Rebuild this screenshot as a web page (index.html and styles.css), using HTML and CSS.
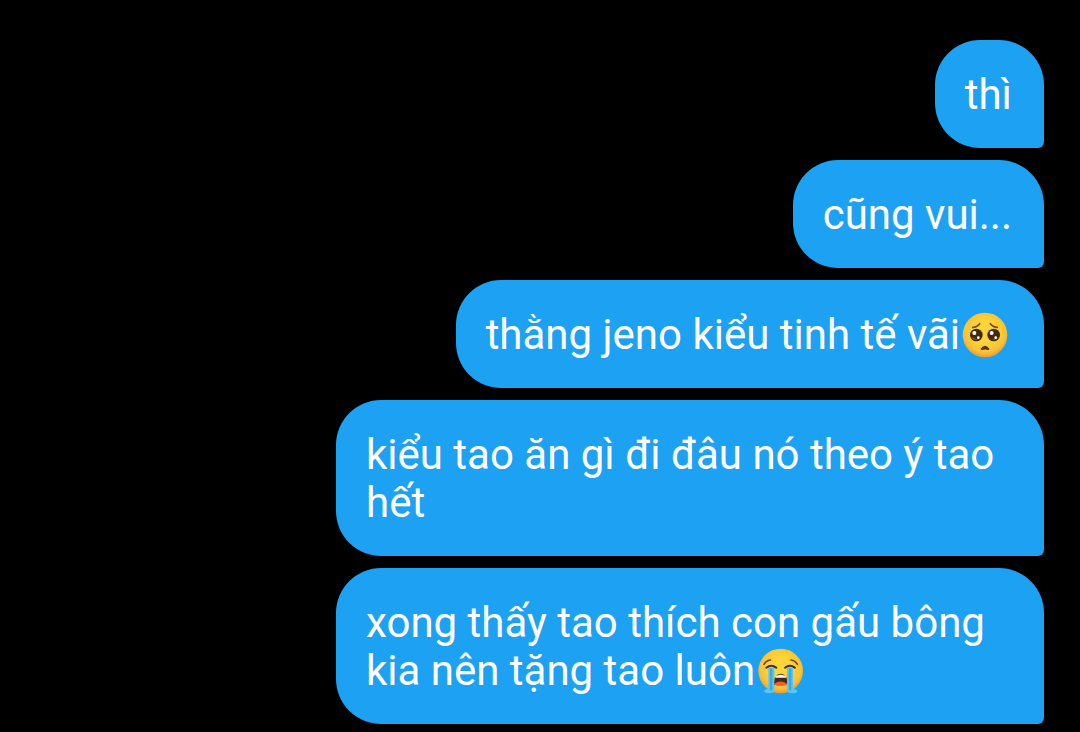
FILE: index.html
```html
<!DOCTYPE html>
<html lang="vi">
<head>
  <meta charset="utf-8">
  <meta name="viewport" content="width=device-width, initial-scale=1">
  <title>Tin nhắn</title>
  <link rel="stylesheet" href="styles.css">
</head>
<body>
  <main class="thread">
    <p class="bubble">thì</p>
    <p class="bubble">cũng vui...</p>
    <p class="bubble">thằng jeno kiểu tinh tế vãi<svg class="emoji" viewBox="19 19 156 138" aria-hidden="true">
      <defs>
        <radialGradient id="face" cx="50%" cy="42%" r="58%">
          <stop offset="0.4" stop-color="#fcd53a"/>
          <stop offset="0.8" stop-color="#f8c234"/>
          <stop offset="1" stop-color="#e39f35"/>
        </radialGradient>
      </defs>
      <circle cx="94" cy="88" r="67" fill="url(#face)"/>
      <g fill="none" stroke="#7b4a16" stroke-width="5" stroke-linecap="round">
        <path d="M57 65Q71 64 78 54"/>
        <path d="M131 65Q117 64 110 54"/>
      </g>
      <g fill="#422b0d">
        <circle cx="68" cy="88" r="19"/>
        <circle cx="120" cy="88" r="19"/>
      </g>
      <g fill="#7d5a3a">
        <path d="M53 95Q60 108 78 100Q69 104 61 97Z"/>
        <path d="M135 95Q128 108 110 100Q119 104 127 97Z"/>
      </g>
      <g fill="#fff">
        <circle cx="62" cy="82" r="6"/>
        <circle cx="74" cy="96" r="4"/>
        <circle cx="114" cy="82" r="6"/>
        <circle cx="126" cy="96" r="4"/>
      </g>
      <path d="M84 130Q94 117 104 130Q94 127 84 130Z" fill="#5b3513" stroke="#5b3513" stroke-width="6" stroke-linejoin="round"/>
    </svg></p>
    <p class="bubble">kiểu tao ăn gì đi đâu nó theo ý tao hết</p>
    <p class="bubble">xong thấy tao thích con gấu bông kia nên tặng tao luôn<svg class="emoji" viewBox="16 21 156 138" aria-hidden="true">
      <circle cx="93" cy="90" r="67" fill="url(#face)"/>
      <g fill="none" stroke="#7b4318" stroke-width="5" stroke-linecap="round">
        <path d="M43 70Q49 59 62 57"/>
        <path d="M143 70Q137 59 124 57"/>
      </g>
      <path d="M72 131Q73 98 93 98Q113 98 114 131Q93 135 72 131Z" fill="#4a2614"/>
      <path d="M77 106Q93 97 109 106V110H77Z" fill="#fff"/>
      <path d="M74 128Q93 115 112 128V132Q93 135 74 132Z" fill="#e8622f"/>
      <path d="M56 80H74V148Q73 157 59 157Q45 157 43 150Q43 145 56 143Z" fill="#59c5f2"/>
      <path d="M130 80H112V148Q113 157 127 157Q141 157 143 150Q143 145 130 143Z" fill="#59c5f2"/>
      <path d="M61 82H68V148H61ZM118 82H125V148H118Z" fill="#35aaf0"/>
      <g fill="none" stroke="#422b0d" stroke-width="6" stroke-linecap="round">
        <path d="M50 80Q65 68 80 80"/>
        <path d="M136 80Q121 68 106 80"/>
      </g>
    </svg></p>
  </main>
</body>
</html>
```
FILE: styles.css
```css
body {
  margin: 0;
  background: #000;
}

.thread {
  display: flex;
  flex-direction: column;
  align-items: flex-end;
  gap: 12px;
  padding: 40px 36px 8px;
}

.bubble {
  box-sizing: border-box;
  max-width: 708px;
  margin: 0;
  padding: 31px 32px 29px 30px;
  border-radius: 45px 45px 6px 45px;
  background: #1da1f2;
  color: #fff;
  font: 400 42px/48px Roboto, "Noto Sans", sans-serif;
}

.emoji {
  width: 52px;
  height: 46px;
  vertical-align: -9px;
}
```
